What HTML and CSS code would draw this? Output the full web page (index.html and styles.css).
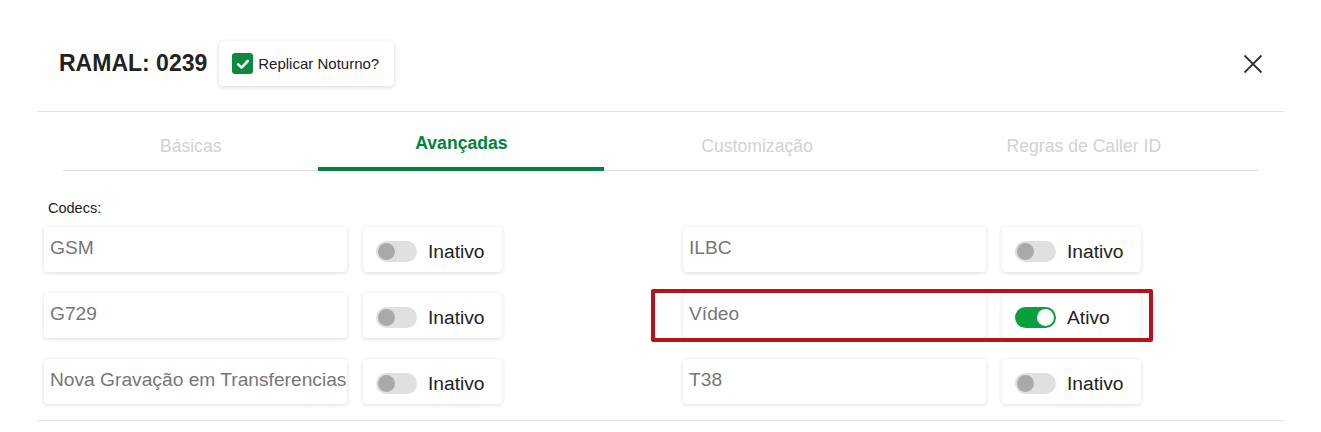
FILE: index.html
```html
<!DOCTYPE html>
<html lang="pt-BR">
<head>
<meta charset="utf-8">
<title>Ramal 0239</title>
<link rel="stylesheet" href="styles.css">
</head>
<body>
<div class="dialog">
  <header class="header">
    <h1 class="title">RAMAL: 0239</h1>
    <label class="check-card">
      <span class="check-box">
        <svg width="20" height="20" viewBox="0 0 20 20"><path d="M5.2 10.4 L8.6 13.6 L14.8 7" fill="none" stroke="#fff" stroke-width="2.6" stroke-linecap="round" stroke-linejoin="round"/></svg>
      </span>
      <span class="check-text">Replicar Noturno?</span>
    </label>
    <button class="close" aria-label="Fechar">
      <svg width="20" height="20" viewBox="0 0 20 20"><path d="M1.5 1.5 L18.5 18.5 M18.5 1.5 L1.5 18.5" stroke="#333" stroke-width="1.8" fill="none"/></svg>
    </button>
  </header>

  <nav class="tabs">
    <div class="tab">Básicas</div>
    <div class="tab active">Avançadas</div>
    <div class="tab">Customização</div>
    <div class="tab">Regras de Caller ID</div>
  </nav>

  <section class="content">
    <div class="section-label">Codecs:</div>
    <div class="rows">
      <div class="row">
        <div class="group">
          <div class="field">GSM</div>
          <div class="toggle-card"><span class="switch"><span class="knob"></span></span><span class="state">Inativo</span></div>
        </div>
        <div class="group">
          <div class="field">ILBC</div>
          <div class="toggle-card"><span class="switch"><span class="knob"></span></span><span class="state">Inativo</span></div>
        </div>
      </div>
      <div class="row">
        <div class="group">
          <div class="field">G729</div>
          <div class="toggle-card"><span class="switch"><span class="knob"></span></span><span class="state">Inativo</span></div>
        </div>
        <div class="group highlighted">
          <div class="field">Vídeo</div>
          <div class="toggle-card"><span class="switch on"><span class="knob"></span></span><span class="state">Ativo</span></div>
          <div class="highlight"></div>
        </div>
      </div>
      <div class="row">
        <div class="group">
          <div class="field">Nova Gravação em Transferencias</div>
          <div class="toggle-card"><span class="switch"><span class="knob"></span></span><span class="state">Inativo</span></div>
        </div>
        <div class="group">
          <div class="field">T38</div>
          <div class="toggle-card"><span class="switch"><span class="knob"></span></span><span class="state">Inativo</span></div>
        </div>
      </div>
    </div>
  </section>
</div>
</body>
</html>
```

FILE: styles.css
```css
* { box-sizing: border-box; }

body {
  margin: 0;
  background: #fff;
  font-family: "Liberation Sans", Arial, sans-serif;
  color: #222;
}

.dialog {
  margin: 0 37px 0 38px;
}

.header {
  display: flex;
  align-items: center;
  padding: 41px 21px 25px 21px;
  border-bottom: 1px solid #e3e3e3;
}

.title {
  margin: 0 12px 0 0;
  font-size: 23px;
  font-weight: bold;
  color: #222;
  letter-spacing: 0;
}

.check-card {
  display: flex;
  align-items: center;
  height: 45px;
  padding: 0 15px 0 13px;
  background: #fff;
  border-radius: 4px;
  box-shadow: 0 1px 4px rgba(0,0,0,0.16);
}

.check-box {
  width: 21px;
  height: 21px;
  border-radius: 3px;
  background: #0a8a3e;
  display: flex;
  align-items: center;
  justify-content: center;
  margin-right: 5px;
}

.check-text {
  font-size: 15px;
  color: #222;
}

.close {
  margin-left: auto;
  border: 0;
  background: none;
  padding: 0;
  width: 20px;
  height: 20px;
  display: flex;
  cursor: pointer;
}

.tabs {
  display: flex;
  margin: 0 26px 0 25px;
  border-bottom: 1px solid #e3e3e3;
  height: 59px;
}

.tab {
  flex: 1 1 auto;
  text-align: center;
  font-size: 17.6px;
  color: #d2d2d2;
  padding-top: 24px;
}

.tab.active {
  color: #00843d;
  font-weight: bold;
  padding-top: 21px;
  box-shadow: inset 0 -4px 0 #00843d;
  margin-bottom: -1px;
}

.content {
  padding: 29px 0 16px 0;
  border-bottom: 1px solid #e3e3e3;
}

.section-label {
  font-size: 14.5px;
  margin-left: 10px;
  margin-bottom: 11px;
}

.rows {
  display: flex;
  flex-direction: column;
  gap: 21px;
  padding-left: 6px;
}

.row {
  display: flex;
}

.group {
  display: flex;
  gap: 16px;
  flex: 0 0 639px;
}

.group + .group {
  flex: 1 1 auto;
}

.highlighted {
  position: relative;
}

.field {
  width: 303px;
  height: 45px;
  padding: 0 0 3px 6px;
  display: flex;
  align-items: center;
  font-size: 19.2px;
  color: #777;
  white-space: nowrap;
  background: #fff;
  border-radius: 4px;
  box-shadow: 0 1px 4px rgba(0,0,0,0.14);
}

.toggle-card {
  width: 139px;
  height: 45px;
  padding: 4px 0 0 13px;
  display: flex;
  align-items: center;
  background: #fff;
  border-radius: 4px;
  box-shadow: 0 1px 4px rgba(0,0,0,0.14);
}

.switch {
  width: 41px;
  height: 21px;
  border-radius: 11px;
  background: #e0e0e0;
  display: flex;
  align-items: center;
  padding: 0 2px;
  margin-right: 11px;
}

.knob {
  width: 17px;
  height: 17px;
  border-radius: 50%;
  background: #a9a9a9;
}

.switch.on {
  background: #07a03c;
  justify-content: flex-end;
}

.switch.on .knob {
  background: #fff;
}

.state {
  font-size: 19.2px;
  color: #222;
}

.highlight {
  position: absolute;
  left: -32px;
  top: -4px;
  width: 502px;
  height: 53px;
  border: 4px solid #b5121b;
  border-radius: 2px;
  pointer-events: none;
}
```
